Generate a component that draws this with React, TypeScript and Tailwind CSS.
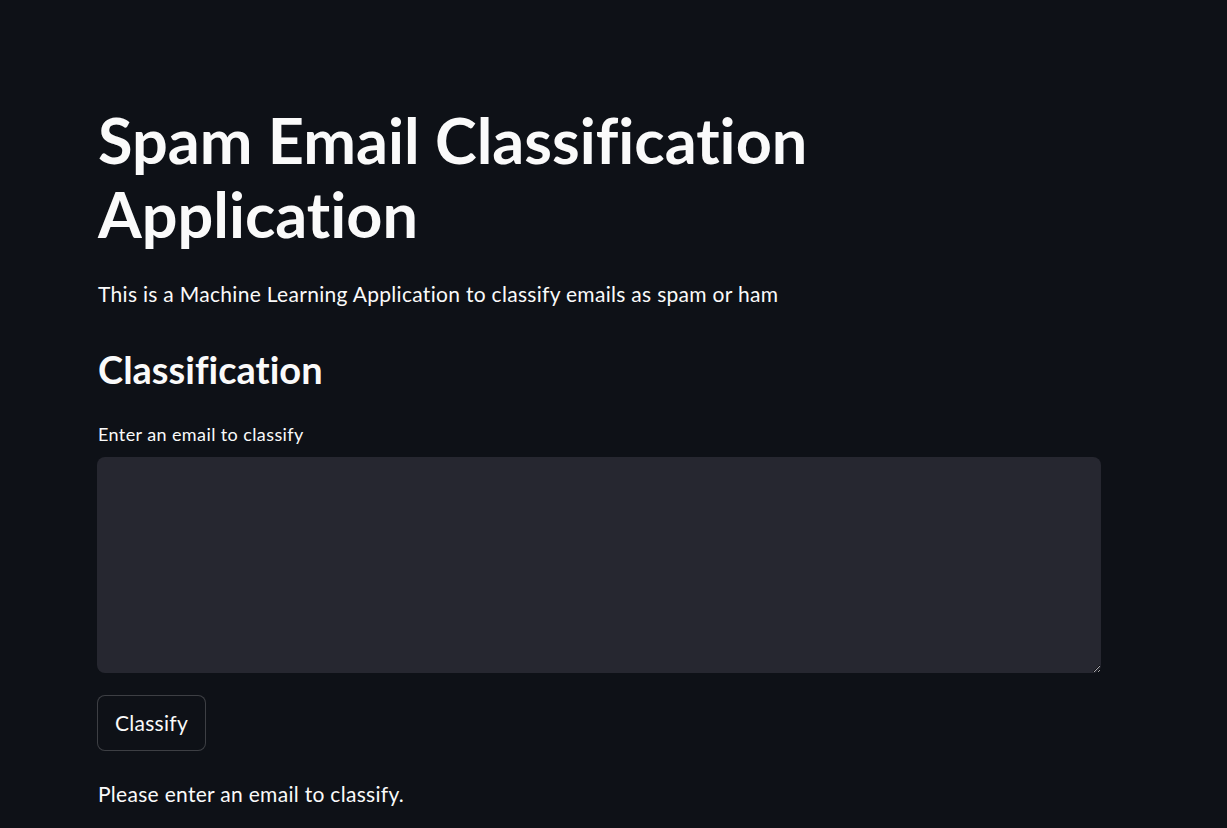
import React from "react";

const App = () => {
  return (
    <div className="min-h-screen w-full bg-[#0e1117] text-[#fafafa] font-['Lato','Liberation_Sans',sans-serif] [font-variant-ligatures:none]">
      <main className="pl-[98px] pt-[103px] pb-10 w-[1102px]">
        <h1 className="text-[63px] leading-[74px] font-bold max-w-[800px]">
          Spam Email Classification Application
        </h1>
        <p className="mt-[28px] text-[21px] leading-[30px] tracking-[0.3px]">
          This is a Machine Learning Application to classify emails as spam or ham
        </p>
        <h2 className="mt-[34px] text-[38px] leading-[52px] font-bold">Classification</h2>
        <label className="block mt-[27px] text-[18px] leading-[24px] tracking-[0.4px]">
          Enter an email to classify
        </label>
        <textarea className="mt-[11px] block w-[1004px] -ml-px h-[216px] rounded-lg bg-[#262730] scheme-dark resize-y outline-none p-4 text-[20px]" />
        <button className="mt-[22px] -ml-px h-[56px] w-[109px] rounded-lg border border-[#fafafa]/20 bg-[#0e1117] text-[21px] tracking-[0.3px]">
          Classify
        </button>
        <p className="mt-[28px] text-[21px] leading-[30px] tracking-[0.3px]">
          Please enter an email to classify.
        </p>
      </main>
    </div>
  );
};

export default App;
